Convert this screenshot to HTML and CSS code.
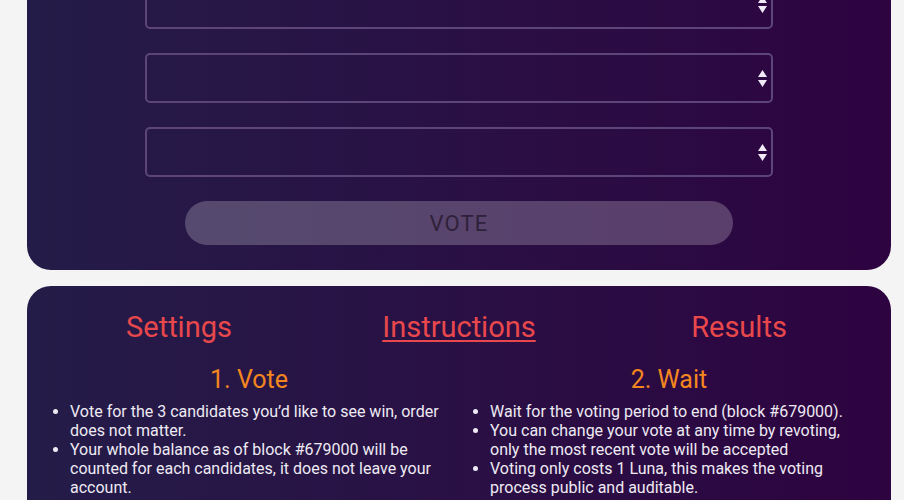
FILE: index.html
```html
<!DOCTYPE html>
<html lang="en">
<head>
<meta charset="utf-8">
<title>Vote</title>
<link rel="stylesheet" href="styles.css">
</head>
<body>
<main class="page">
  <section class="card vote-card">
    <div class="select"><svg class="arrows" width="9" height="17" viewBox="0 0 9 17"><path d="M0 7 L4.5 0 L9 7 Z M0 10 L9 10 L4.5 17 Z"/></svg></div>
    <div class="select"><svg class="arrows" width="9" height="17" viewBox="0 0 9 17"><path d="M0 7 L4.5 0 L9 7 Z M0 10 L9 10 L4.5 17 Z"/></svg></div>
    <div class="select"><svg class="arrows" width="9" height="17" viewBox="0 0 9 17"><path d="M0 7 L4.5 0 L9 7 Z M0 10 L9 10 L4.5 17 Z"/></svg></div>
    <button class="vote-btn" type="button">VOTE</button>
  </section>

  <section class="card info-card">
    <nav class="tabs">
      <a class="tab">Settings</a>
      <a class="tab active">Instructions</a>
      <a class="tab">Results</a>
    </nav>
    <div class="steps">
      <div class="step">
        <h2 class="step-title">1. Vote</h2>
        <ul class="step-list">
          <li>Vote for the 3 candidates you’d like to see win, order does not matter.</li>
          <li>Your whole balance as of block #679000 will be counted for each candidates, it does not leave your account.</li>
          <li>The 3 candidates with the most votes will be used for the next period.</li>
        </ul>
      </div>
      <div class="step">
        <h2 class="step-title">2. Wait</h2>
        <ul class="step-list">
          <li>Wait for the voting period to end (block #679000).</li>
          <li>You can change your vote at any time by revoting, only the most recent vote will be accepted</li>
          <li>Voting only costs 1 Luna, this makes the voting process public and auditable.</li>
        </ul>
      </div>
    </div>
  </section>
</main>
</body>
</html>
```

FILE: styles.css
```css
* { box-sizing: border-box; }

html, body {
  margin: 0;
  padding: 0;
  background: #f4f4f4;
  font-family: Roboto, "Liberation Sans", sans-serif;
  overflow: hidden;
}

.page {
  padding: 0 13px 0 27px;
  display: flex;
  flex-direction: column;
  gap: 16px;
}

.card {
  border-radius: 24px;
  background: linear-gradient(90deg, #241c48 0%, #2a0f44 55%, #2d0340 100%);
}

.vote-card {
  margin-top: -51px;
  padding: 30px 0 25px;
  display: flex;
  flex-direction: column;
  align-items: center;
  gap: 24px;
}

.select {
  width: 628px;
  height: 50px;
  border: 2px solid #5d457a;
  border-radius: 5px;
  display: flex;
  align-items: center;
  justify-content: flex-end;
  padding-right: 4px;
}

.arrows { fill: #f1e9f6; display: block; }

.vote-btn {
  width: 548px;
  height: 44px;
  border: none;
  border-radius: 22px;
  background: rgba(255, 255, 255, 0.22);
  color: #2f213b;
  font-family: Roboto, "Liberation Sans", sans-serif;
  font-size: 22px;
  letter-spacing: 1.2px;
  padding: 0;
}

.info-card {
  padding: 24px 12px 40px;
}

.tabs {
  display: grid;
  grid-template-columns: 1fr 1fr 1fr;
  text-align: center;
}

.tab {
  font-size: 29px;
  color: #e8484b;
  text-decoration: none;
}

.tab.active {
  text-decoration: underline;
  text-underline-offset: 3px;
}

.steps {
  display: grid;
  grid-template-columns: 1fr 1fr;
  margin-top: 21px;
}

.step { padding-right: 12px; }

.step-title {
  margin: 0 0 8px;
  text-align: center;
  font-size: 25px;
  font-weight: 400;
  color: #f4861f;
  padding-left: 12px;
}

.step-list {
  margin: 0;
  padding-left: 31px;
  color: #eeeaf3;
  font-size: 16px;
}
```
